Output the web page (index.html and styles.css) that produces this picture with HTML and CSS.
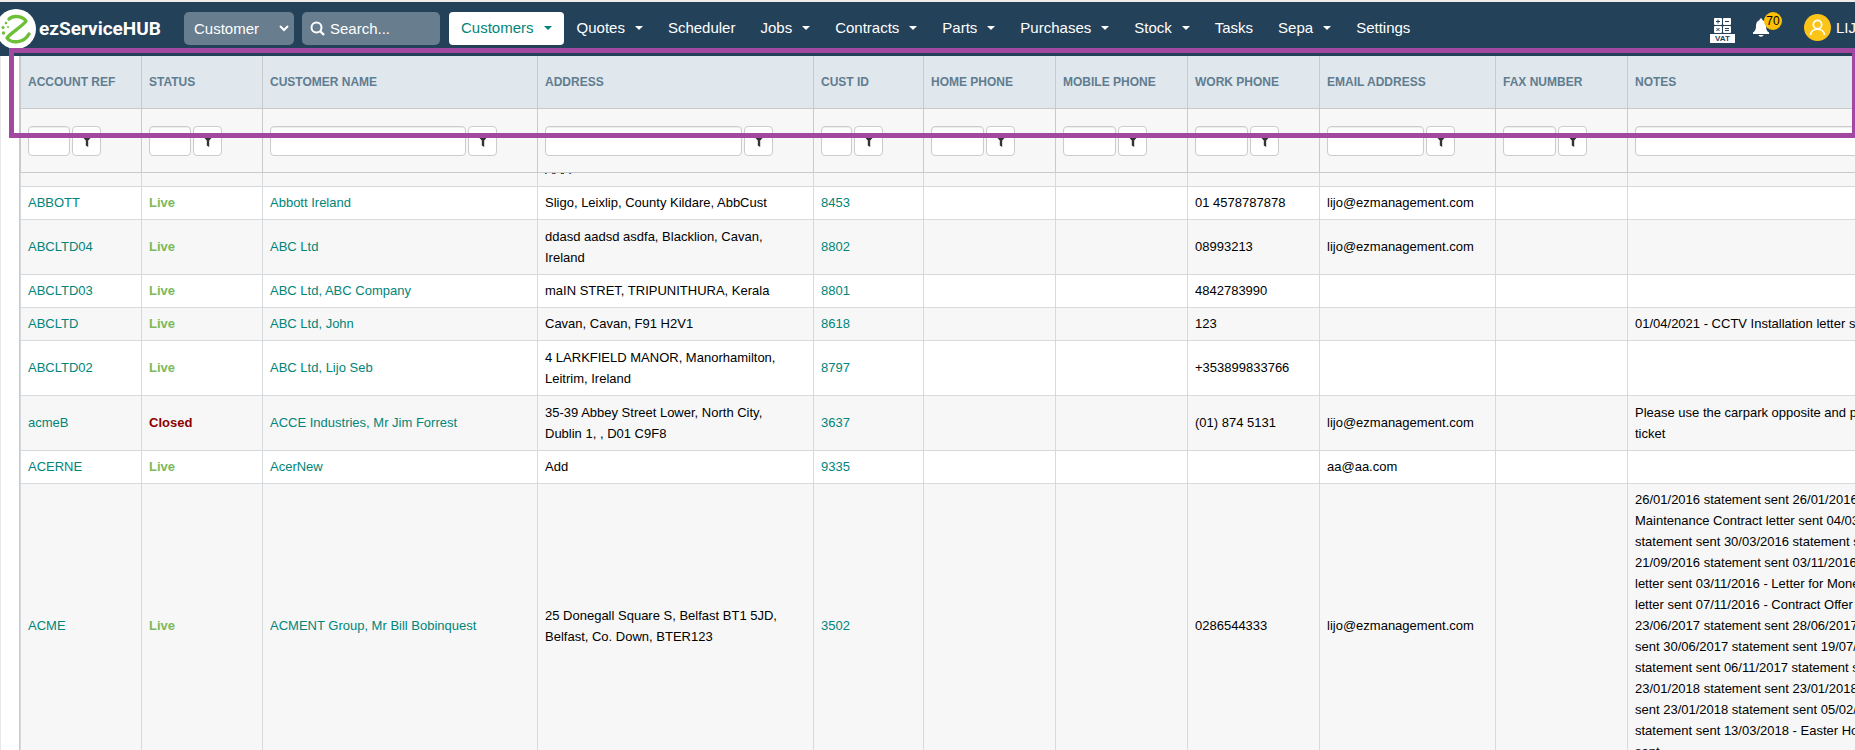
FILE: index.html
```html
<!DOCTYPE html>
<html lang="en">
<head>
<meta charset="utf-8">
<title>ezServiceHUB - Customers</title>
<link rel="stylesheet" href="styles.css">
</head>
<body>
<header class="navbar">
    <a class="brand" href="#">
        <svg class="logo" width="40" height="40" viewBox="0 0 40 40">
            <circle cx="20" cy="20" r="20" fill="#fff"/>
            <path d="M13 10C17 6 27 7 30 12C27 17 13 25 11 29C16 35 28 34 33 25" fill="none" stroke="#6dbf37" stroke-width="3.4" stroke-linecap="round" stroke-linejoin="round"/>
            <g fill="#6dbf37"><circle cx="10" cy="14" r="1.3"/><circle cx="7" cy="18.500" r="1.600"/><circle cx="12" cy="18" r="1"/><circle cx="7.500" cy="24" r="1.700"/></g>
        </svg>
        <span>ezServiceHUB</span>
    </a>
    <select class="search-type" aria-label="Search type">
        <option>Customer</option>
        <option>Quote</option>
        <option>Job</option>
    </select>
    <label class="search">
        <svg width="15" height="15" viewBox="0 0 15 15"><circle cx="6.500" cy="6.500" r="5" fill="none" stroke="#fff" stroke-width="2"/><path d="M10 10L14 14" stroke="#fff" stroke-width="2.400"/></svg>
        <input type="text" placeholder="Search..." aria-label="Search">
    </label>
    <nav class="menu">
        <a class="active caret" href="#">Customers</a>
        <a class="caret" href="#">Quotes</a>
        <a href="#">Scheduler</a>
        <a class="caret" href="#">Jobs</a>
        <a class="caret" href="#">Contracts</a>
        <a class="caret" href="#">Parts</a>
        <a class="caret" href="#">Purchases</a>
        <a class="caret" href="#">Stock</a>
        <a href="#">Tasks</a>
        <a class="caret" href="#">Sepa</a>
        <a href="#">Settings</a>
    </nav>
    <div class="tools">
        <a class="vat" href="#">
            <svg width="17" height="15" viewBox="0 0 17 15">
                <g fill="#fff"><rect width="8" height="7" rx="1"/><rect x="9" width="8" height="7" rx="1"/><rect y="8" width="8" height="7" rx="1"/><rect x="9" y="8" width="8" height="7" rx="1"/></g>
                <path d="M2 3.500H6M4 1.500V5.500M11 3.500H15M2.500 10L5.500 13M5.500 10L2.500 13M11 10.500H15M11 12.500H15" stroke="#24415a"/>
            </svg>
            <b>VAT</b>
        </a>
        <a class="bell" href="#" aria-label="Notifications">
            <svg width="18" height="19" viewBox="0 0 18 19"><path d="M9 0.500C10 0.500 10.400 1.200 10.300 2C13 3 14 5 14 8C14 12 15.500 13.500 17 14.500V16H1V14.500C2.500 13.500 4 12 4 8C4 5 5 3 7.700 2C7.600 1.200 8 0.500 9 0.500ZM6.500 17H11.500C11 19.300 7 19.300 6.500 17Z" fill="#fff"/></svg>
            <span class="badge">70</span>
        </a>
        <a class="user" href="#">
            <svg width="27" height="27" viewBox="0 0 27 27"><circle cx="13.500" cy="13.500" r="13.500" fill="#fcc419"/><circle cx="13.500" cy="10.500" r="4.200" fill="none" stroke="#fff" stroke-width="1.700"/><path d="M6.500 21C7 13.200 20 13.200 20.500 21" fill="none" stroke="#fff" stroke-width="1.700"/></svg>
            <span>LIJO</span>
        </a>
    </div>
</header>

<main class="grid">
    <table class="grid-head">
        <colgroup>
            <col class="c-ref"><col class="c-status"><col class="c-name"><col class="c-address"><col class="c-id"><col class="c-phone"><col class="c-phone"><col class="c-phone"><col class="c-email"><col class="c-phone"><col class="c-notes">
        </colgroup>
        <thead>
            <tr>
                <th>ACCOUNT REF</th>
                <th>STATUS</th>
                <th>CUSTOMER NAME</th>
                <th>ADDRESS</th>
                <th>CUST ID</th>
                <th>HOME PHONE</th>
                <th>MOBILE PHONE</th>
                <th>WORK PHONE</th>
                <th>EMAIL ADDRESS</th>
                <th>FAX NUMBER</th>
                <th>NOTES</th>
            </tr>
            <tr class="filters">
                <td><div class="filter f-ref"><input type="text" aria-label="Filter account ref"><button type="button" aria-label="Filter"><svg width="10" height="14"><use href="#funnel"/></svg></button></div></td>
                <td><div class="filter f-ref"><input type="text" aria-label="Filter status"><button type="button" aria-label="Filter"><svg width="10" height="14"><use href="#funnel"/></svg></button></div></td>
                <td><div class="filter f-name"><input type="text" aria-label="Filter customer name"><button type="button" aria-label="Filter"><svg width="10" height="14"><use href="#funnel"/></svg></button></div></td>
                <td><div class="filter f-address"><input type="text" aria-label="Filter address"><button type="button" aria-label="Filter"><svg width="10" height="14"><use href="#funnel"/></svg></button></div></td>
                <td><div class="filter f-id"><input type="text" aria-label="Filter cust id"><button type="button" aria-label="Filter"><svg width="10" height="14"><use href="#funnel"/></svg></button></div></td>
                <td><div class="filter f-phone"><input type="text" aria-label="Filter home phone"><button type="button" aria-label="Filter"><svg width="10" height="14"><use href="#funnel"/></svg></button></div></td>
                <td><div class="filter f-phone"><input type="text" aria-label="Filter mobile phone"><button type="button" aria-label="Filter"><svg width="10" height="14"><use href="#funnel"/></svg></button></div></td>
                <td><div class="filter f-phone"><input type="text" aria-label="Filter work phone"><button type="button" aria-label="Filter"><svg width="10" height="14"><use href="#funnel"/></svg></button></div></td>
                <td><div class="filter f-email"><input type="text" aria-label="Filter email address"><button type="button" aria-label="Filter"><svg width="10" height="14"><use href="#funnel"/></svg></button></div></td>
                <td><div class="filter f-phone"><input type="text" aria-label="Filter fax number"><button type="button" aria-label="Filter"><svg width="10" height="14"><use href="#funnel"/></svg></button></div></td>
                <td><div class="filter f-notes"><input type="text" aria-label="Filter notes"><button type="button" aria-label="Filter"><svg width="10" height="14"><use href="#funnel"/></svg></button></div></td>
            </tr>
        </thead>
    </table>
    <div class="grid-scroll">
        <table class="grid-body">
            <colgroup>
                <col class="c-ref"><col class="c-status"><col class="c-name"><col class="c-address"><col class="c-id"><col class="c-phone"><col class="c-phone"><col class="c-phone"><col class="c-email"><col class="c-phone"><col class="c-notes">
            </colgroup>
            <tbody>
                <tr class="two"><td></td><td></td><td></td><td>Belfast,<br>AAA</td><td></td><td></td><td></td><td></td><td></td><td></td><td></td></tr>
                <tr><td><a href="#">ABBOTT</a></td><td class="live">Live</td><td><a href="#">Abbott Ireland</a></td><td>Sligo, Leixlip, County Kildare, AbbCust</td><td><a href="#">8453</a></td><td></td><td></td><td>01 4578787878</td><td>lijo@ezmanagement.com</td><td></td><td></td></tr>
                <tr class="two"><td><a href="#">ABCLTD04</a></td><td class="live">Live</td><td><a href="#">ABC Ltd</a></td><td>ddasd aadsd asdfa, Blacklion, Cavan, Ireland</td><td><a href="#">8802</a></td><td></td><td></td><td>08993213</td><td>lijo@ezmanagement.com</td><td></td><td></td></tr>
                <tr><td><a href="#">ABCLTD03</a></td><td class="live">Live</td><td><a href="#">ABC Ltd, ABC Company</a></td><td>maIN STRET, TRIPUNITHURA, Kerala</td><td><a href="#">8801</a></td><td></td><td></td><td>4842783990</td><td></td><td></td><td></td></tr>
                <tr><td><a href="#">ABCLTD</a></td><td class="live">Live</td><td><a href="#">ABC Ltd, John</a></td><td>Cavan, Cavan, F91 H2V1</td><td><a href="#">8618</a></td><td></td><td></td><td>123</td><td></td><td></td><td>01/04/2021 - CCTV Installation letter sent</td></tr>
                <tr class="two"><td><a href="#">ABCLTD02</a></td><td class="live">Live</td><td><a href="#">ABC Ltd, Lijo Seb</a></td><td>4 LARKFIELD MANOR, Manorhamilton, Leitrim, Ireland</td><td><a href="#">8797</a></td><td></td><td></td><td>+353899833766</td><td></td><td></td><td></td></tr>
                <tr class="two"><td><a href="#">acmeB</a></td><td class="closed">Closed</td><td><a href="#">ACCE Industries, Mr Jim Forrest</a></td><td>35-39 Abbey Street Lower, North City, Dublin 1, , D01 C9F8</td><td><a href="#">3637</a></td><td></td><td></td><td>(01) 874 5131</td><td>lijo@ezmanagement.com</td><td></td><td>Please use the carpark opposite and pay for<br>ticket</td></tr>
                <tr><td><a href="#">ACERNE</a></td><td class="live">Live</td><td><a href="#">AcerNew</a></td><td>Add</td><td><a href="#">9335</a></td><td></td><td></td><td></td><td>aa@aa.com</td><td></td><td></td></tr>
                <tr><td><a href="#">ACME</a></td><td class="live">Live</td><td><a href="#">ACMENT Group, Mr Bill Bobinquest</a></td><td>25 Donegall Square S, Belfast BT1 5JD, Belfast, Co. Down, BTER123</td><td><a href="#">3502</a></td><td></td><td></td><td>0286544333</td><td>lijo@ezmanagement.com</td><td></td><td>26/01/2016 statement sent 26/01/2016<br>Maintenance Contract letter sent 04/03/2016<br>statement sent 30/03/2016 statement sent<br>21/09/2016 statement sent 03/11/2016<br>letter sent 03/11/2016 - Letter for Money<br>letter sent 07/11/2016 - Contract Offer<br>23/06/2017 statement sent 28/06/2017<br>sent 30/06/2017 statement sent 19/07/2017<br>statement sent 06/11/2017 statement sent<br>23/01/2018 statement sent 23/01/2018<br>sent 23/01/2018 statement sent 05/02/2018<br>statement sent 13/03/2018 - Easter Hours<br>sent</td></tr>
            </tbody>
        </table>
    </div>
</main>

<!-- outline round the fixed header rows -->
<div class="marker"></div>

<svg class="defs" width="0" height="0">
    <symbol id="funnel" viewBox="0 0 10 14"><path d="M0.500 1H9.500V3L6.200 6.500V13L3.800 11.500V6.500L0.500 3Z" fill="#333"/></symbol>
</svg>
</body>
</html>
```
FILE: styles.css
```css
* {
    box-sizing: border-box;
}
body {
    margin: 0;
    height: 100vh;
    overflow: hidden;
    position: relative;
    display: flex;
    flex-direction: column;
    border-top: 2px solid #f0ece8;
    background: #fff;
    color: #000;
    font-family: "Liberation Sans", Arial, sans-serif;
    font-size: 13px;
    line-height: 21px;
}
a {
    color: #00857a;
    text-decoration: none;
}

/* top bar */
.navbar {
    flex: none;
    display: flex;
    align-items: flex-start;
    height: 54px;
    padding-top: 10px;
    background: #24415a;
    font-size: 15px;
    white-space: nowrap;
}
.navbar a {
    color: #fff;
}
.brand {
    display: flex;
    align-items: center;
    gap: 3px;
    width: 188px;
    height: 33px;
    margin-left: -4px;
    font-family: Roboto, sans-serif;
    font-size: 19px;
    font-weight: bold;
}
.logo {
    flex: none;
}
.search-type {
    width: 110px;
    height: 33px;
    margin-right: 8px;
    padding: 0 10px;
    border: 0;
    border-radius: 5px;
    appearance: none;
    background: #687d8e url("data:image/svg+xml,%3Csvg xmlns='http://www.w3.org/2000/svg' width='10' height='7'%3E%3Cpath d='M1 1L5 5L9 1' fill='none' stroke='white' stroke-width='2'/%3E%3C/svg%3E") no-repeat right 5px center;
    color: #fff;
    font: 15px "Liberation Sans", Arial, sans-serif;
}
.search {
    display: flex;
    align-items: center;
    gap: 5px;
    width: 138px;
    height: 33px;
    margin-right: 9px;
    padding: 0 8px;
    border-radius: 5px;
    background: #687d8e;
}
.search svg {
    flex: none;
}
.search input {
    width: 100%;
    min-width: 0;
    padding: 0;
    border: 0;
    outline: 0;
    background: none;
    color: #fff;
    font: 15px "Liberation Sans", Arial, sans-serif;
}
.search input::placeholder {
    color: #fff;
}
.menu {
    display: flex;
    gap: 1px;
}
.menu a {
    height: 33px;
    padding: 0 12px;
    border-radius: 4px;
    line-height: 32px;
}
.menu a.active {
    background: #fff;
    color: #00857a;
}
.caret::after {
    content: "";
    display: inline-block;
    margin-left: 10px;
    vertical-align: 3px;
    border: 4px solid transparent;
    border-top-color: currentColor;
    border-bottom: 0;
}
.tools {
    display: flex;
    flex: none;
    margin-left: auto;
    height: 33px;
}
.vat {
    display: flex;
    flex-direction: column;
    align-items: center;
    width: 25px;
    margin: 6px 17px 0 0;
}
.vat svg {
    flex: none;
}
.vat b {
    width: 25px;
    margin-top: 1px;
    background: #fff;
    color: #24415a;
    font-size: 8px;
    line-height: 9px;
    text-align: center;
}
.bell {
    position: relative;
    width: 52px;
    padding-top: 6px;
}
.badge {
    position: absolute;
    left: 12px;
    top: 0;
    width: 18px;
    height: 18px;
    border-radius: 50%;
    background: #ffc107;
    color: #000;
    font-size: 12px;
    line-height: 18px;
    text-align: center;
}
.user {
    display: flex;
    align-items: center;
    gap: 5px;
    width: 51px;
    height: 31px;
}
.user svg {
    flex: none;
}

/* customer grid */
.grid {
    flex: 1;
    min-height: 0;
    display: flex;
    flex-direction: column;
    padding-left: 18px;
    border-left: 1px solid #e8e8e8;
}
.grid table {
    flex: none;
    table-layout: fixed;
    width: 1950px;
    border-left: 1px solid #c8cacc;
    border-collapse: separate;
    border-spacing: 0;
}
.c-ref,
.c-status { width: 121px; }
.c-name { width: 275px; }
.c-address { width: 276px; }
.c-id { width: 110px; }
.c-phone { width: 132px; }
.c-email { width: 176px; }
.c-notes { width: 342px; }

.grid th,
.grid td {
    padding: 0 7px;
    border-left: 1px solid #d5dadf;
    border-bottom: 1px solid #d5dadf;
    text-align: left;
    vertical-align: middle;
}
.grid .grid-head th,
.grid .grid-head td {
    border-color: #c8cacc;
}
.grid-head th {
    height: 53px;
    background: #e0e7ed;
    color: #607d90;
    font-size: 12px;
}
.grid-head td {
    height: 64px;
    background: #f7f7f7;
}
.filter {
    display: flex;
    gap: 2px;
}
.filter input,
.filter button {
    height: 30px;
    padding: 0;
    border: 1px solid #ccc;
    border-radius: 4px;
    background: #fff;
}
.filter input {
    box-shadow: inset 0 1px 1px rgba(0, 0, 0, 0.08);
}
.filter button {
    display: flex;
    align-items: center;
    justify-content: center;
    width: 29px;
}
.f-ref input { width: 42px; }
.f-name input { width: 196px; }
.f-address input { width: 197px; }
.f-id input { width: 31px; }
.f-phone input { width: 53px; }
.f-email input { width: 97px; }
.f-notes input { width: 264px; }

.grid-scroll {
    flex: 1;
    min-height: 0;
    overflow: hidden;
}
/* first row is scrolled half out of view */
.grid-body {
    margin-top: -41px;
}
.grid .grid-body td {
    height: 33px;
    padding: 5px 14px 6px 7px;
}
.grid .grid-body .two td {
    height: 55px;
}
.grid-body tr:nth-child(odd) {
    background: #f7f7f7;
}
.live {
    color: #7cba59;
    font-weight: bold;
}
.closed {
    color: #8b0000;
    font-weight: bold;
}

.marker {
    position: absolute;
    top: 46px;
    left: 9px;
    right: -2px;
    height: 90px;
    border: 5px solid #a348a1;
    pointer-events: none;
}
.defs {
    position: absolute;
}
```
